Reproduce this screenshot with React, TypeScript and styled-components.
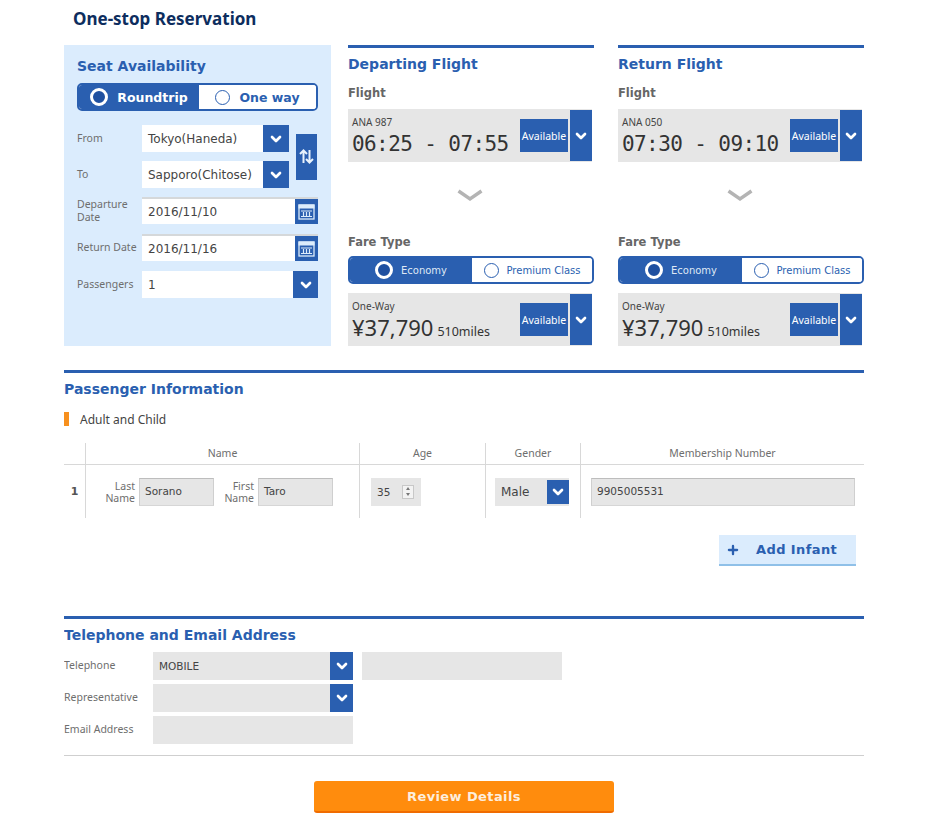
import styled, { createGlobalStyle } from 'styled-components';
import { ChevronDown, Plus } from 'lucide-react';

const blue = '#2a5fb0';
const grey = '#e6e6e6';

const GlobalStyle = createGlobalStyle`
  html, body {
    margin: 0;
    padding: 0;
    background: #fff;
    font-family: "DejaVu Sans", Verdana, sans-serif;
    color: #444;
  }
`;

const Page = styled.div`
  width: 800px;
  height: 828px;
  margin-left: 64px;
  overflow: hidden;
`;

const PageTitle = styled.h1`
  margin: 0;
  padding: 9px 0 0 9px;
  height: 45px;
  box-sizing: border-box;
  font-size: 17px;
  line-height: 20px;
  font-weight: bold;
  color: #0d2d5e;
  font-family: "Noto Sans", sans-serif;
`;

const TopRow = styled.div`
  display: grid;
  grid-template-columns: 267px 246px 246px;
  column-gap: 17px;
  height: 301px;
  & > *:nth-child(3) { margin-left: 7px; }
`;

const SearchPanel = styled.section`
  background: #dbecfd;
  padding: 11px 13px 0 13px;
`;

const SectionTitle = styled.h2`
  margin: 0;
  font-size: 14px;
  line-height: 20px;
  font-weight: bold;
  color: ${blue};
`;

const Toggle = styled.div<{ $big?: boolean }>`
  display: grid;
  grid-template-columns: ${({ $big }) => ($big ? '120px 1fr' : '122px 1fr')};
  height: 28px;
  margin-top: ${({ $big }) => ($big ? '7px' : '6px')};
  border: 2px solid ${blue};
  border-radius: 5px;
  box-sizing: border-box;
  overflow: hidden;
  background: #fff;
`;

const ToggleOption = styled.div<{ $on?: boolean; $big?: boolean }>`
  display: flex;
  align-items: center;
  justify-content: center;
  gap: ${({ $big }) => ($big ? '9px' : '8px')};
  background: ${({ $on }) => ($on ? blue : '#fff')};
  color: ${({ $on, $big }) => ($on ? ($big ? '#fff' : '#dfe8f5') : blue)};
  font-size: ${({ $big }) => ($big ? '12.5px' : '10px')};
  font-weight: ${({ $big }) => ($big ? 'bold' : 'normal')};
  white-space: nowrap;
`;

const Radio = styled.span<{ $on?: boolean }>`
  width: ${({ $on }) => ($on ? '18px' : '15px')};
  height: ${({ $on }) => ($on ? '18px' : '15px')};
  box-sizing: border-box;
  border-radius: 50%;
  border: ${({ $on }) => ($on ? '3px solid #fff' : `1.5px solid ${blue}`)};
  background: ${({ $on }) => ($on ? '#1f50a0' : '#fff')};
`;

const RouteGrid = styled.div`
  display: grid;
  grid-template-columns: 212px 1fr;
  margin-top: 14px;
`;

const RouteRows = styled.div`
  display: flex;
  flex-direction: column;
  gap: 9px;
`;

const FormRow = styled.div<{ $gap?: number }>`
  display: grid;
  grid-template-columns: 65px 1fr;
  height: 27px;
  align-items: center;
  margin-top: ${({ $gap }) => $gap ?? 0}px;
`;

const FieldLabel = styled.label`
  font-size: 10.5px;
  line-height: 13px;
  color: #6e6e6e;
  font-family: "Noto Sans", sans-serif;
`;

const Control = styled.div<{ $tone?: 'white' | 'grey'; $inset?: boolean; $end?: boolean }>`
  display: flex;
  height: 100%;
  min-width: 0;
  align-items: stretch;
  justify-content: ${({ $end }) => ($end ? 'flex-end' : 'space-between')};
  background: ${({ $tone }) => ($tone === 'grey' ? grey : '#fff')};
  border-top: ${({ $inset }) => ($inset ? '2px solid #d5d8da' : 'none')};
  box-sizing: border-box;
`;

const ControlText = styled.span<{ $size?: number }>`
  align-self: center;
  padding-left: 6px;
  font-size: ${({ $size }) => $size ?? 12}px;
  color: #444;
  white-space: nowrap;
`;

const SquareButton = styled.span<{ $w?: number }>`
  flex: none;
  width: ${({ $w }) => $w ?? 26}px;
  background: ${blue};
  color: #fff;
  display: flex;
  align-items: center;
  justify-content: center;
`;

const SwapButton = styled.div`
  align-self: center;
  justify-self: end;
  width: 21px;
  height: 46px;
  margin-right: 1px;
  background: ${blue};
  display: flex;
  align-items: center;
  justify-content: center;
`;

const FlightColumn = styled.section`
  border-top: 3px solid ${blue};
  width: 246px;
  height: 301px;
  box-sizing: border-box;
  padding-top: 6px;
`;

const SubLabel = styled.div<{ $top?: number }>`
  margin-top: ${({ $top }) => $top ?? 0}px;
  font-size: 11.5px;
  line-height: 16px;
  font-weight: bold;
  color: #666;
`;

const InfoCard = styled.div<{ $top: number }>`
  display: flex;
  align-items: center;
  height: 53px;
  width: 244px;
  margin-top: ${({ $top }) => $top}px;
  background: ${grey};
  padding-left: 4px;
  box-sizing: border-box;
`;

const InfoText = styled.div`
  flex: 1;
  min-width: 0;
  align-self: flex-start;
  padding-top: 7px;
`;

const InfoCaption = styled.div`
  font-size: 10px;
  line-height: 13px;
  color: #444;
  font-family: "Noto Sans", sans-serif;
`;

const FlightTime = styled.div`
  margin-top: 2px;
  font-family: "DejaVu Sans Mono", monospace;
  font-size: 21px;
  line-height: 26px;
  letter-spacing: -0.6px;
  color: #333;
  white-space: nowrap;
`;

const Price = styled.div`
  margin-top: 1px;
  font-size: 22px;
  line-height: 26px;
  color: #333;
  white-space: nowrap;
  font-family: "Noto Sans", sans-serif;
`;

const Miles = styled.span`
  margin-left: 4px;
  font-size: 12.5px;
`;

const Available = styled.div`
  width: 48px;
  height: 33px;
  margin-right: 2px;
  background: ${blue};
  color: #fff;
  font-size: 10.5px;
  font-family: "Noto Sans", sans-serif;
  display: flex;
  align-items: center;
  justify-content: center;
`;

const CardDrop = styled.div`
  width: 22px;
  height: 51px;
  background: ${blue};
  color: #fff;
  display: flex;
  align-items: center;
  justify-content: center;
`;

const NextArrow = styled.div`
  height: 68px;
  display: flex;
  align-items: center;
  justify-content: center;
  padding-right: 2px;
`;

const Section = styled.section<{ $top: number }>`
  margin-top: ${({ $top }) => $top}px;
  border-top: 3px solid ${blue};
  padding-top: 6px;
`;

const GroupLabel = styled.div`
  display: flex;
  align-items: center;
  gap: 11px;
  margin-top: 12px;
  height: 16px;
  font-size: 12px;
  color: #444;
  font-family: "Noto Sans", sans-serif;
`;

const OrangeMark = styled.span`
  width: 5px;
  height: 14px;
  background: #f7901e;
`;

const PaxTable = styled.div`
  display: grid;
  grid-template-columns: 21px 274px 126px 95px 284px;
  grid-template-rows: 22px 53px;
  margin-top: 16px;
`;

const HeadCell = styled.div<{ $first?: boolean }>`
  border-left: ${({ $first }) => ($first ? 'none' : '1px solid #d8d8d8')};
  border-bottom: 1px solid #d8d8d8;
  font-size: 10.5px;
  line-height: 20px;
  text-align: center;
  color: #6e6e6e;
  font-family: "Noto Sans", sans-serif;
`;

const BodyCell = styled.div<{ $first?: boolean; $pad?: string }>`
  border-left: ${({ $first }) => ($first ? 'none' : '1px solid #d8d8d8')};
  display: flex;
  align-items: center;
  padding: ${({ $pad }) => $pad ?? '0'};
  gap: 4px;
`;

const RowNumber = styled.div`
  width: 100%;
  text-align: center;
  font-size: 11px;
  font-weight: bold;
  color: #555;
`;

const NameLabel = styled.span`
  width: 37px;
  margin-left: 12px;
  text-align: right;
  font-size: 10.5px;
  line-height: 12px;
  color: #6e6e6e;
  font-family: "Noto Sans", sans-serif;
  &:not(:first-child) { margin-left: -1px; }
`;

const TextField = styled.div<{ $w?: number }>`
  width: ${({ $w }) => ($w ? `${$w}px` : '100%')};
  height: 28px;
  box-sizing: border-box;
  background: ${grey};
  border-top: 1px solid #bdbdbd;
  border-left: 1px solid #cfcfcf;
  border-right: 1px solid #cfcfcf;
  border-bottom: 1px solid #d6d6d6;
  padding: 0 0 1px 5px;
  display: flex;
  align-items: center;
  font-size: 10.5px;
  color: #444;
`;

const AgeField = styled.div`
  width: 50px;
  height: 28px;
  background: ${grey};
  display: flex;
  align-items: center;
  justify-content: space-between;
  padding: 0 7px 0 6px;
  box-sizing: border-box;
  font-size: 10.5px;
  color: #444;
`;

const Spinner = styled.div`
  width: 12px;
  height: 14px;
  background: #f3f3f3;
  border: 1px solid #c8c8c8;
  box-sizing: border-box;
  display: flex;
  flex-direction: column;
  align-items: center;
  justify-content: space-around;
  &::before, &::after {
    content: '';
    border-left: 2.5px solid transparent;
    border-right: 2.5px solid transparent;
  }
  &::before { border-bottom: 3px solid #777; }
  &::after { border-top: 3px solid #777; }
`;

const GenderSelect = styled.div`
  width: 74px;
  height: 28px;
  background: ${grey};
  display: flex;
  justify-content: space-between;
  align-items: center;
  padding-left: 6px;
  box-sizing: border-box;
  font-size: 12px;
  color: #444;
`;

const GenderDrop = styled.span`
  width: 22px;
  height: 24px;
  background: ${blue};
  color: #fff;
  display: flex;
  align-items: center;
  justify-content: center;
`;

const ActionRow = styled.div`
  display: flex;
  justify-content: flex-end;
  padding-right: 8px;
  margin-top: 17px;
`;

const AddInfant = styled.button`
  width: 137px;
  height: 31px;
  border: none;
  border-bottom: 2px solid #8fc0e8;
  background: #dbecfd;
  color: ${blue};
  font-family: inherit;
  font-size: 13px;
  font-weight: bold;
  letter-spacing: 0.4px;
  display: flex;
  align-items: center;
  gap: 16px;
  padding: 0 0 0 7px;
`;

const ContactRows = styled.div`
  display: flex;
  flex-direction: column;
  gap: 4px;
  margin-top: 7px;
`;

const ContactRow = styled.div`
  display: grid;
  grid-template-columns: 89px 200px 209px;
  height: 28px;
  align-items: stretch;
  & > *:nth-child(3) { margin-left: 9px; }
`;

const ContactLabel = styled.div`
  align-self: center;
  padding-bottom: 3px;
  font-size: 10.5px;
  color: #6e6e6e;
  font-family: "Noto Sans", sans-serif;
`;

const Divider = styled.hr`
  margin: 11px 0 0 0;
  border: none;
  border-top: 1px solid #cfcfcf;
`;

const SubmitRow = styled.div`
  display: flex;
  justify-content: center;
  margin-top: 25px;
`;

const SubmitButton = styled.button`
  width: 300px;
  height: 32px;
  border: none;
  border-bottom: 2px solid #f06c00;
  border-radius: 3px;
  background: #ff8c0d;
  color: #fdeedd;
  font-family: inherit;
  font-size: 13px;
  font-weight: bold;
  letter-spacing: 0.4px;
`;

const Chevron = () => <ChevronDown size={16} strokeWidth={4} color="#fff" />;

const CalendarIcon = () => (
  <svg width="17" height="16" viewBox="0 0 17 16" fill="none" stroke="#dcecfb">
    <rect x="1" y="1" width="15" height="14" strokeWidth="1.3" />
    <rect x="1" y="1" width="15" height="3" fill="#dcecfb" />
    <path d="M3 7h11M3 12.5h11M5.5 8v4M8.5 8v4M11.5 8v4" strokeWidth="1.2" />
  </svg>
);

const SwapIcon = () => (
  <svg width="15" height="15" viewBox="0 0 15 15" fill="none" stroke="#e8f2fc" strokeWidth="2">
    <path d="M4.5 14V2M1 5l3.5-3.5L8 5M10.5 1v12M7 10l3.5 3.5L14 10" />
  </svg>
);

const WideChevron = () => (
  <svg width="26" height="14" viewBox="0 0 26 14" fill="none">
    <path d="M1.5 2 L13 10 L24.5 2" stroke="#b4b4b4" strokeWidth="3.4" />
  </svg>
);

const FlightPanel = ({ title, code, time }: { title: string; code: string; time: string }) => (
  <FlightColumn>
    <SectionTitle>{title}</SectionTitle>
    <SubLabel $top={11}>Flight</SubLabel>
    <InfoCard $top={8}>
      <InfoText>
        <InfoCaption>{code}</InfoCaption>
        <FlightTime>{time}</FlightTime>
      </InfoText>
      <Available>Available</Available>
      <CardDrop><Chevron /></CardDrop>
    </InfoCard>
    <NextArrow><WideChevron /></NextArrow>
    <SubLabel $top={4}>Fare Type</SubLabel>
    <Toggle>
      <ToggleOption $on><Radio $on />Economy</ToggleOption>
      <ToggleOption><Radio />Premium Class</ToggleOption>
    </Toggle>
    <InfoCard $top={9}>
      <InfoText>
        <InfoCaption>One-Way</InfoCaption>
        <Price>¥37,790<Miles>510miles</Miles></Price>
      </InfoText>
      <Available>Available</Available>
      <CardDrop><Chevron /></CardDrop>
    </InfoCard>
  </FlightColumn>
);

export default function App() {
  return (
    <Page>
      <GlobalStyle />
      <PageTitle>One-stop Reservation</PageTitle>
      <TopRow>
        <SearchPanel>
          <SectionTitle>Seat Availability</SectionTitle>
          <Toggle $big>
            <ToggleOption $on $big><Radio $on />Roundtrip</ToggleOption>
            <ToggleOption $big><Radio />One way</ToggleOption>
          </Toggle>
          <RouteGrid>
            <RouteRows>
              <FormRow>
                <FieldLabel>From</FieldLabel>
                <Control>
                  <ControlText>Tokyo(Haneda)</ControlText>
                  <SquareButton><Chevron /></SquareButton>
                </Control>
              </FormRow>
              <FormRow>
                <FieldLabel>To</FieldLabel>
                <Control>
                  <ControlText>Sapporo(Chitose)</ControlText>
                  <SquareButton><Chevron /></SquareButton>
                </Control>
              </FormRow>
            </RouteRows>
            <SwapButton><SwapIcon /></SwapButton>
          </RouteGrid>
          <FormRow $gap={9}>
            <FieldLabel>Departure Date</FieldLabel>
            <Control $inset>
              <ControlText>2016/11/10</ControlText>
              <SquareButton $w={23}><CalendarIcon /></SquareButton>
            </Control>
          </FormRow>
          <FormRow $gap={10}>
            <FieldLabel>Return Date</FieldLabel>
            <Control $inset>
              <ControlText>2016/11/16</ControlText>
              <SquareButton $w={23}><CalendarIcon /></SquareButton>
            </Control>
          </FormRow>
          <FormRow $gap={10}>
            <FieldLabel>Passengers</FieldLabel>
            <Control>
              <ControlText>1</ControlText>
              <SquareButton $w={25}><Chevron /></SquareButton>
            </Control>
          </FormRow>
        </SearchPanel>
        <FlightPanel title="Departing Flight" code="ANA 987" time="06:25 - 07:55" />
        <FlightPanel title="Return Flight" code="ANA 050" time="07:30 - 09:10" />
      </TopRow>

      <Section $top={24}>
        <SectionTitle>Passenger Information</SectionTitle>
        <GroupLabel><OrangeMark />Adult and Child</GroupLabel>
        <PaxTable>
          <HeadCell $first />
          <HeadCell>Name</HeadCell>
          <HeadCell>Age</HeadCell>
          <HeadCell>Gender</HeadCell>
          <HeadCell>Membership Number</HeadCell>
          <BodyCell $first><RowNumber>1</RowNumber></BodyCell>
          <BodyCell>
            <NameLabel>Last Name</NameLabel>
            <TextField $w={75}>Sorano</TextField>
            <NameLabel>First Name</NameLabel>
            <TextField $w={75}>Taro</TextField>
          </BodyCell>
          <BodyCell $pad="0 0 0 11px"><AgeField>35<Spinner /></AgeField></BodyCell>
          <BodyCell $pad="0 0 0 9px">
            <GenderSelect>Male<GenderDrop><Chevron /></GenderDrop></GenderSelect>
          </BodyCell>
          <BodyCell $pad="0 9px 0 10px"><TextField>9905005531</TextField></BodyCell>
        </PaxTable>
        <ActionRow>
          <AddInfant><Plus size={14} strokeWidth={4} />Add Infant</AddInfant>
        </ActionRow>
      </Section>

      <Section $top={50}>
        <SectionTitle>Telephone and Email Address</SectionTitle>
        <ContactRows>
          <ContactRow>
            <ContactLabel>Telephone</ContactLabel>
            <Control $tone="grey">
              <ControlText $size={10.5}>MOBILE</ControlText>
              <SquareButton $w={23}><Chevron /></SquareButton>
            </Control>
            <Control $tone="grey" />
          </ContactRow>
          <ContactRow>
            <ContactLabel>Representative</ContactLabel>
            <Control $tone="grey" $end>
              <SquareButton $w={23}><Chevron /></SquareButton>
            </Control>
          </ContactRow>
          <ContactRow>
            <ContactLabel>Email Address</ContactLabel>
            <Control $tone="grey" />
          </ContactRow>
        </ContactRows>
        <Divider />
        <SubmitRow>
          <SubmitButton>Review Details</SubmitButton>
        </SubmitRow>
      </Section>
    </Page>
  );
}
